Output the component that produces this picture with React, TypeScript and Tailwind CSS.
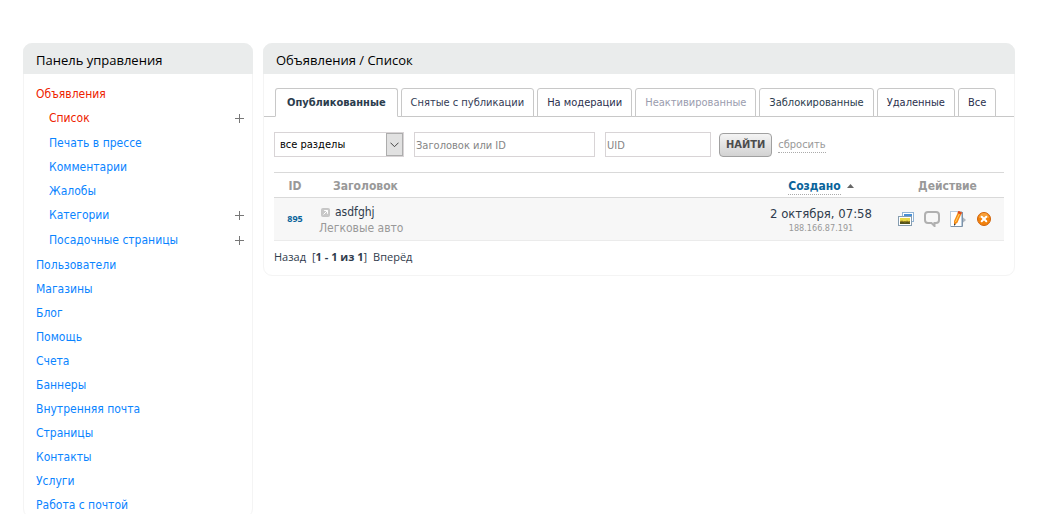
import type { ReactNode } from "react";

type MenuItem = { label: string; sub?: boolean; active?: boolean; add?: boolean };

const MENU: MenuItem[] = [
  { label: "Объявления", active: true },
  { label: "Список", sub: true, active: true, add: true },
  { label: "Печать в прессе", sub: true },
  { label: "Комментарии", sub: true },
  { label: "Жалобы", sub: true },
  { label: "Категории", sub: true, add: true },
  { label: "Посадочные страницы", sub: true, add: true },
  { label: "Пользователи" },
  { label: "Магазины" },
  { label: "Блог" },
  { label: "Помощь" },
  { label: "Счета" },
  { label: "Баннеры" },
  { label: "Внутренняя почта" },
  { label: "Страницы" },
  { label: "Контакты" },
  { label: "Услуги" },
  { label: "Работа с почтой" },
];

const TABS = [
  { label: "Опубликованные", tone: "px-[11px] border-b-white font-bold text-[#2b3c4d]" },
  { label: "Снятые с публикации", tone: "px-[9px] text-[#333b55]" },
  { label: "На модерации", tone: "px-[9px] text-[#2b2f4d]" },
  { label: "Неактивированные", tone: "px-[9px] text-[#9a9cae]" },
  { label: "Заблокированные", tone: "px-[9px] text-[#2b3c4d]" },
  { label: "Удаленные", tone: "px-[9px] text-[#2b2f4d]" },
  { label: "Все", tone: "px-[9px] text-[#2b2f4d]" },
];

export default function App() {
  return (
    <div className="flex h-screen items-start gap-[10px] overflow-hidden bg-white pt-[43px] pr-[38px] pl-[23px] font-['DejaVu_Sans_Condensed','DejaVu_Sans',sans-serif] text-[12px] text-[#2f3b4c]">
      <aside className="w-[230px] shrink-0">
        <Panel title="Панель управления">
          <nav className="pt-2 pr-2 pl-3">
            <ul>
              {MENU.map((item) => (
                <MenuRow key={item.label} item={item} />
              ))}
            </ul>
          </nav>
        </Panel>
      </aside>
      <main className="min-w-0 flex-1">
        <Panel title="Объявления / Список">
          <Tabs />
          <div className="px-[10px] pt-[15px] pb-[10px]">
            <Filter />
            <Listing />
            <Pager />
          </div>
        </Panel>
      </main>
    </div>
  );
}

function Panel({ title, children }: { title: string; children: ReactNode }) {
  return (
    <section className="rounded-[9px] border border-[#f4f4f4]">
      <h2 className="-mx-px -mt-px rounded-t-[9px] bg-[#eaecec] px-[13px] pt-[3px] font-['Open_Sans','Noto_Sans',sans-serif] text-[13px] leading-7 font-normal text-black">
        {title}
      </h2>
      {children}
    </section>
  );
}

function MenuRow({ item }: { item: MenuItem }) {
  return (
    <li
      className={`flex items-start justify-between leading-6 ${item.sub ? "pl-[13px]" : ""} ${item.add ? "h-[25px]" : "h-6"}`}
    >
      <a href="#" className={item.active ? "text-[#ee2200]" : "text-[#0a84ff]"}>
        {item.label}
      </a>
      {item.add && (
        <button type="button" aria-label={`Добавить: ${item.label}`} className="flex h-[25px] items-center text-[#777]">
          <svg width="9" height="9" viewBox="0 0 9 9" stroke="currentColor" fill="none">
            <path d="M4.5 0v9M0 4.5h9" />
          </svg>
        </button>
      )}
    </li>
  );
}

function Tabs() {
  return (
    <div className="mt-[14px] flex gap-[3px] border-b border-[#c8c8c8] pl-[11px] text-[11px]">
      {TABS.map((tab) => (
        <button
          key={tab.label}
          type="button"
          className={`-mb-px h-[29px] rounded-t-[3px] border border-[#c8c8c8] bg-white pt-[2px] whitespace-nowrap ${tab.tone}`}
        >
          {tab.label}
        </button>
      ))}
    </div>
  );
}

function Filter() {
  const field = "h-[25px] border border-[#d8d4d6] bg-white px-px pt-px text-[11px] placeholder:text-[#858585]";
  return (
    <form className="flex items-center" onSubmit={(e) => e.preventDefault()}>
      <div className="relative w-[130px]">
        <select
          aria-label="Раздел"
          className="h-[25px] w-full appearance-none border border-[#d8d4d6] bg-white pt-[2px] pl-[5px] text-[11px] text-black"
        >
          <option>все разделы</option>
        </select>
        <span className="pointer-events-none absolute top-px right-px flex h-[23px] w-[17px] items-center justify-center border border-[#adadad] bg-[#e1e1e1]">
          <svg width="9" height="6" viewBox="0 0 9 6" fill="none" stroke="#444">
            <path d="M.5.7 4.5 4.7 8.5.7" />
          </svg>
        </span>
      </div>
      <input aria-label="Заголовок или ID" placeholder="Заголовок или ID" className={`${field} ml-[10px] w-[181px]`} />
      <input aria-label="UID" placeholder="UID" className={`${field} ml-[10px] w-[106px]`} />
      <button
        type="submit"
        className="ml-2 h-6 rounded-[4px] border border-[#a0a0a0] bg-linear-to-b from-[#f4f4f4] to-[#d2d2d2] px-[6px] pt-[2px] text-[11px] font-bold text-[#4c4c4c]"
      >
        НАЙТИ
      </button>
      <a href="#" className="mt-px ml-[6px] border-b border-dotted border-[#aaa] text-[11px] leading-[14px] text-[#999]">
        сбросить
      </a>
    </form>
  );
}

function Listing() {
  return (
    <table className="mt-[15px] w-full table-fixed border-collapse">
      <thead>
        <tr className="h-[25px] border-y border-[#d9d9d9] text-[12px] leading-4 text-[#999]">
          <th className="w-[42px] pt-[2px]">ID</th>
          <th className="pt-[2px] pl-[17px] text-left">Заголовок</th>
          <th className="w-[140px] pt-[2px]">
            <a href="#" className="inline-block border-b border-dotted border-[#aaa] leading-[15px] text-[#0a649b]">
              Создано
            </a>
            <svg className="ml-[6px] inline-block" width="7" height="4" viewBox="0 0 7 4" fill="#666">
              <path d="M0 4 3.5 0 7 4z" />
            </svg>
          </th>
          <th className="w-[113px] pt-[2px]">Действие</th>
        </tr>
      </thead>
      <tbody>
        <tr className="h-[43px] border-b border-[#ebebeb] bg-[#f7f7f7]">
          <td className="text-center font-['Noto_Sans',sans-serif] text-[9px] font-bold text-[#0a649b]">895</td>
          <td className="pt-[2px] pl-[3px] leading-4">
            <a href="#" className="flex items-center gap-[3px]">
              <OpenIcon />
              asdfghj
            </a>
            <a href="#" className="block text-[#999]">
              Легковые авто
            </a>
          </td>
          <td className="pt-[2px] text-center">
            <div className="text-[13px] leading-4">2 октября, 07:58</div>
            <div className="text-[9px] leading-3 text-[#999]">188.166.87.191</div>
          </td>
          <td>
            <div className="flex items-center gap-[10px] pl-[7px]">
              <IconButton label="Изображения">
                <ImagesIcon />
              </IconButton>
              <IconButton label="Комментарии">
                <CommentIcon />
              </IconButton>
              <IconButton label="Редактировать">
                <EditIcon />
              </IconButton>
              <IconButton label="Удалить">
                <DeleteIcon />
              </IconButton>
            </div>
          </td>
        </tr>
      </tbody>
    </table>
  );
}

function Pager() {
  return (
    <div className="mt-2 flex font-['Open_Sans','Noto_Sans',sans-serif] text-[11px] leading-4">
      <a href="#">Назад</a>
      <span className="mx-[6px]">
        [<b>1 - 1 из 1</b>]
      </span>
      <a href="#">Вперёд</a>
    </div>
  );
}

function IconButton({ label, children }: { label: string; children: ReactNode }) {
  return (
    <button type="button" aria-label={label} className="size-4">
      {children}
    </button>
  );
}

function OpenIcon() {
  return (
    <svg className="mx-[2px]" width="9" height="9" viewBox="0 0 9 9" fill="none">
      <rect x=".5" y=".5" width="8" height="8" rx="1" fill="#c8c8c8" stroke="#c6c6c6" />
      <path d="M2.5 6.5l4-4M3.2 2.5h3.3v3.3" stroke="#fff" />
    </svg>
  );
}

function ImagesIcon() {
  return (
    <svg width="16" height="16" viewBox="0 0 16 16" fill="none">
      <rect x="4.5" y="1.5" width="11" height="9" fill="#fff" stroke="#91b4d5" />
      <rect x="6" y="3" width="8" height="6" fill="#4a90d5" />
      <rect x=".5" y="5.5" width="13" height="9" fill="#fff" stroke="#869db0" />
      <rect x="2" y="7" width="10" height="3" fill="#e9d94a" />
      <rect x="2" y="10" width="10" height="3" fill="#54531c" />
      <path d="M2 10.500l2-.5 3 1 2-1 3 1" stroke="#a68c22" />
    </svg>
  );
}

function CommentIcon() {
  return (
    <svg width="16" height="16" viewBox="0 0 16 16" fill="none" stroke="#b0b0b0" strokeWidth="2">
      <path d="M4 1h8Q15 1 15 4v5Q15 12 12 12h-1.500v3L7.500 12H4Q1 12 1 9V4Q1 1 4 1z" />
    </svg>
  );
}

function EditIcon() {
  return (
    <svg width="16" height="16" viewBox="0 0 16 16" fill="none">
      <path d="M12 5.500l4 3.500-4 3.500z" fill="#aeb6bf" />
      <rect x=".5" y=".5" width="11" height="15" fill="#fff" stroke="#b8cbdc" />
      <path d="M12.500 1v14.500H1" stroke="#7d92a8" />
      <path d="M8.500 0l3.500 1.500L7.500 11.500 4 14.500 4 10z" fill="#f58b16" />
      <path d="M8.500 0l3.500 1.500-1 2-3.500-1.500z" fill="#dc4b24" />
      <path d="M9.300 3 5.500 11" stroke="#ffd36a" />
      <path d="M4 12.500v2.200l1.800-1.200z" fill="#3a3a3a" />
    </svg>
  );
}

function DeleteIcon() {
  return (
    <svg width="16" height="16" viewBox="0 0 16 16" fill="none">
      <circle cx="8" cy="8" r="6.500" fill="#f2820c" stroke="#cf620b" />
      <path d="M3 7a5 5 0 0 1 10 0z" fill="#f8a03a" />
      <path d="M5.700 5.700l4.600 4.600M10.300 5.700l-4.600 4.600" stroke="#fff" strokeWidth="2" strokeLinecap="round" />
    </svg>
  );
}
